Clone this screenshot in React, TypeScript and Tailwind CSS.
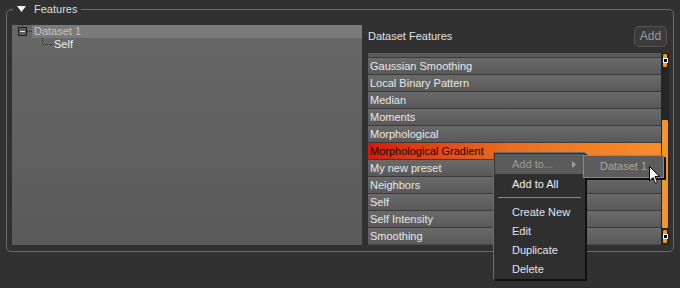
const features = [
  '',
  'Gaussian Smoothing',
  'Local Binary Pattern',
  'Median',
  'Moments',
  'Morphological',
  'Morphological Gradient',
  'My new preset',
  'Neighbors',
  'Self',
  'Self Intensity',
  'Smoothing',
]

function ScrollButton() {
  return (
    <div className="h-[15px] mx-[1px] rounded-[2px] bg-[#f0962a] border border-[#1c1c1c] flex items-center justify-center">
      <div className="w-[3px] h-[3px] bg-black ring-1 ring-white" />
    </div>
  )
}

function FeatureRow({ name }: { name: string }) {
  const active = name === 'Morphological Gradient'
  return (
    <div
      className={
        active
          ? 'h-[17px] border-t border-[#3a3a3a] pl-[2px] pt-[1px] flex items-center text-[#240000] bg-linear-to-r from-[#d11a0c] via-[#ee6e1e] to-[#f58f2a]'
          : 'h-[17px] border-t border-[#3a3a3a] pl-[2px] pt-[1px] flex items-center text-[#e8e8e8] bg-linear-to-b from-[#6a6a6a] to-[#595959]'
      }
    >
      {name}
    </div>
  )
}

export default function App() {
  return (
    <div
      className="relative w-[680px] h-[288px] overflow-hidden bg-[#313131] text-[11px] leading-none"
      style={{ fontFamily: '"Liberation Sans", Arial, sans-serif' }}
    >
      <div className="pl-[6px] pt-[9px]">
        <div className="relative w-[668px] h-[243px] border border-[#6c6c6c] rounded-[5px] pl-[5px] pt-[15px] flex">
          <div className="absolute -top-[8px] left-[6px] h-[14px] px-[4px] bg-[#313131] flex items-center gap-[8px]">
            <svg width="9" height="6" viewBox="0 0 9 6">
              <path d="M0 0 H9 L4.5 6 Z" fill="#f2f2f2" />
            </svg>
            <span className="text-[#dcdcdc]">Features</span>
          </div>

          {/* tree */}
          <div className="w-[350px] h-[220px] bg-linear-to-b from-[#676767] to-[#5a5a5a]">
            <div className="h-[13px] flex items-center">
              <div className="w-[20px] h-[13px] relative flex items-center">
                <svg width="20" height="13" viewBox="0 0 20 13">
                  <line x1="10.5" y1="0" x2="10.5" y2="2" stroke="#2a2a2a" strokeDasharray="1 1" />
                  <rect x="6.5" y="2.5" width="8" height="8" fill="#5e5e5e" stroke="#1e1e1e" />
                  <line x1="8" y1="6.5" x2="13" y2="6.5" stroke="#e8e8e8" />
                  <line x1="15" y1="6.5" x2="20" y2="6.5" stroke="#2a2a2a" strokeDasharray="1 1" />
                </svg>
              </div>
              <div className="flex-1 h-[13px] bg-[#7a7a7a] pl-[2px] flex items-center text-[#c4c4c4]">
                Dataset 1
              </div>
            </div>
            <div className="h-[13px] flex items-center">
              <svg width="42" height="13" viewBox="0 0 42 13">
                <line x1="30.5" y1="0" x2="30.5" y2="6" stroke="#2a2a2a" strokeDasharray="1 1" />
                <line x1="31" y1="6.5" x2="40" y2="6.5" stroke="#2a2a2a" strokeDasharray="1 1" />
              </svg>
              <span className="text-[#eeeeee]">Self</span>
            </div>
          </div>

          {/* dataset features */}
          <div className="ml-[6px] w-[304px] flex flex-col">
            <div className="h-[22px] flex items-center justify-between pr-[5px]">
              <span className="text-[#e0e0e0]">Dataset Features</span>
              <div className="w-[33px] h-[21px] rounded-[5px] bg-[#3b3b3b] border border-[#555] flex items-center justify-center text-[12px] text-[#9c9c9c]">
                Add
              </div>
            </div>
            <div className="mt-[6px] w-[301px] h-[192px] flex">
              <div className="w-[293px] h-[192px] overflow-hidden bg-[#4a4a4a]">
                <div className="-mt-[13px]">
                  {features.map((f, i) => (
                    <FeatureRow key={i} name={f} />
                  ))}
                </div>
              </div>
              <div className="w-[8px] h-[192px] bg-[#252525] flex flex-col">
                <ScrollButton />
                <div className="h-[52px]" />
                <div className="h-[108px] mx-[1px] bg-[#f0962a] rounded-[1px]" />
                <div className="h-[1px]" />
                <ScrollButton />
              </div>
            </div>
          </div>
        </div>
      </div>

      {/* context menu */}
      <div className="absolute left-[493px] top-[152px] w-[92px] h-[127px] bg-[#2f2f2f] border-l border-t border-[#6e6e6e] shadow-[2px_2px_0_#111] pt-[1px] px-[1px]">
        <div className="h-[20px] bg-[#5a5a5a] flex items-center pl-[17px] pr-[8px] justify-between text-[#9a9a9a]">
          <span>Add to...</span>
          <svg width="4" height="7" viewBox="0 0 4 7">
            <path d="M0 0 L4 3.5 L0 7 Z" fill="#a0a0a0" />
          </svg>
        </div>
        <div className="h-[20px] flex items-center pl-[17px] text-[#f0f0f0]">Add to All</div>
        <div className="h-[9px] pt-[3px] px-[3px]">
          <div className="h-[1px] bg-[#8a8a8a]" />
        </div>
        {['Create New', 'Edit', 'Duplicate', 'Delete'].map((m) => (
          <div key={m} className="h-[19px] flex items-center pl-[17px] text-[#e4e4f0]">
            {m}
          </div>
        ))}
      </div>

      {/* submenu */}
      <div className="absolute left-[583px] top-[155px] w-[81px] h-[23px] bg-[#5c5c5c] border border-[#8a8a8a] shadow-[2px_2px_0_#111] flex items-center pl-[16px] text-[#a8a8a8]">
        Dataset 1
      </div>

      {/* cursor */}
      <svg className="absolute left-[649px] top-[166px]" width="12" height="19" viewBox="0 0 12 19">
        <path
          d="M0.5 0.5 L0.5 15 L4 11.5 L6.5 17.5 L8.5 16.5 L6 10.5 L10.5 10.5 Z"
          fill="#ffffff"
          stroke="#000000"
          strokeWidth="1"
        />
      </svg>
    </div>
  )
}
